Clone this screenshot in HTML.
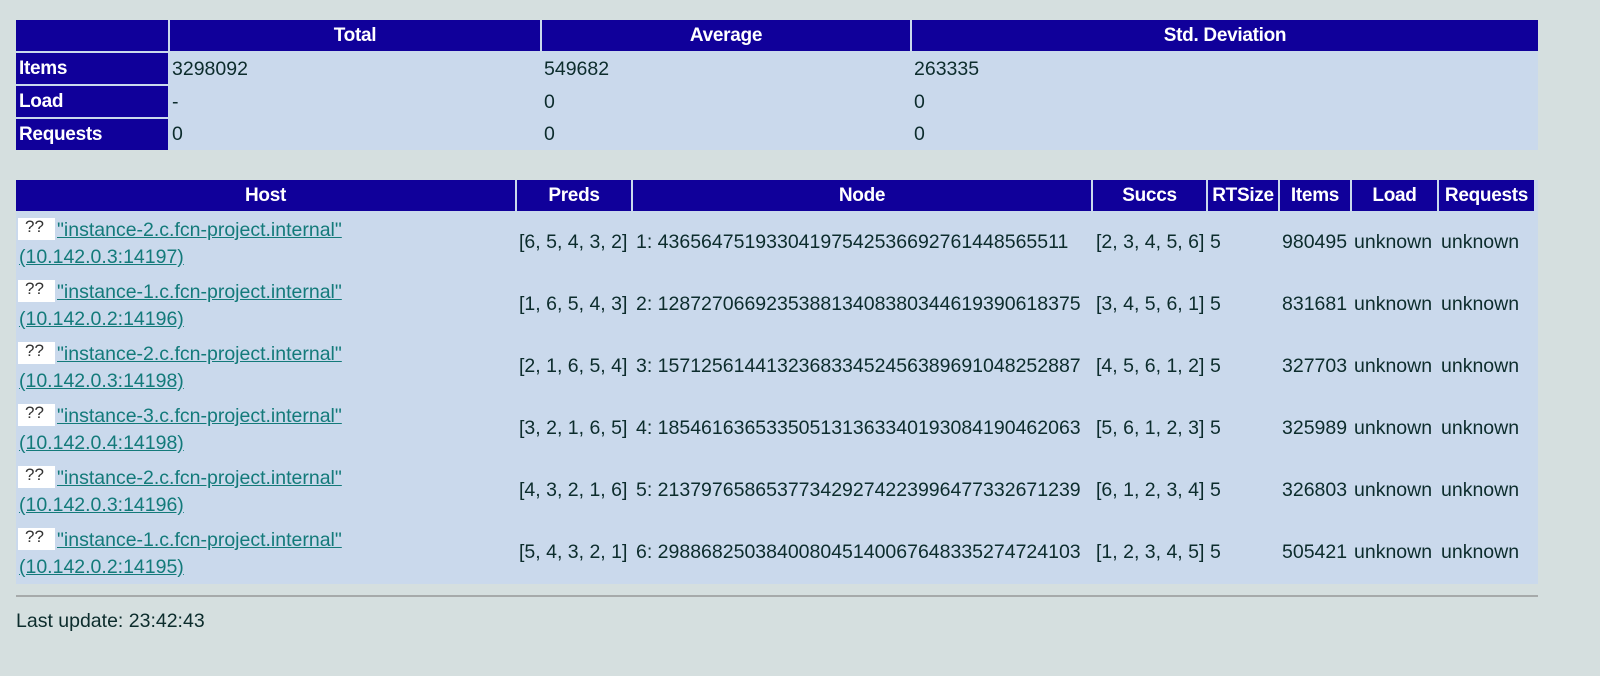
<!DOCTYPE html>
<html><head><meta charset="utf-8"><style>
*{margin:0;padding:0;box-sizing:border-box}
body{width:1600px;height:676px;background:#d5dfdf;font-family:"Liberation Sans",Arial,sans-serif;font-size:19.5px;color:#0c2c2c;position:relative;overflow:hidden}
.h{position:absolute;background:#10009a;color:#fff;font-weight:bold;text-align:center;line-height:31px;height:31px;white-space:nowrap;overflow:hidden;font-size:19px;letter-spacing:-0.3px}
.l{text-align:left;padding-left:3px}
.bg{position:absolute;background:#cad9ec}
.t{position:absolute;white-space:nowrap;line-height:22px}
a{color:#137a7a;text-decoration:underline}
.img{position:absolute;width:37px;height:22px;background:#fff;font-size:17px;color:#333;padding-left:7px;line-height:17px}
hr{position:absolute;left:16px;top:595px;width:1522px;border:0;border-top:2px solid #a6aaaa}
</style></head><body>
<div class="bg" style="left:16px;top:20px;width:1522px;height:130px"></div>
<div class="h" style="left:16px;top:20px;width:152px"></div>
<div class="h" style="left:170px;top:20px;width:370px">Total</div>
<div class="h" style="left:542px;top:20px;width:368px">Average</div>
<div class="h" style="left:912px;top:20px;width:626px">Std. Deviation</div>
<div class="h l" style="left:16px;top:53px;width:152px">Items</div>
<div class="h l" style="left:16px;top:86px;width:152px">Load</div>
<div class="h l" style="left:16px;top:119px;width:152px">Requests</div>
<div class="t" style="left:172px;top:58px">3298092</div><div class="t" style="left:544px;top:58px">549682</div><div class="t" style="left:914px;top:58px">263335</div>
<div class="t" style="left:172px;top:91px">-</div><div class="t" style="left:544px;top:91px">0</div><div class="t" style="left:914px;top:91px">0</div>
<div class="t" style="left:172px;top:123px">0</div><div class="t" style="left:544px;top:123px">0</div><div class="t" style="left:914px;top:123px">0</div>

<div class="bg" style="left:16px;top:180px;width:1522px;height:404px"></div>
<div class="h" style="left:16px;top:180px;width:499px">Host</div>
<div class="h" style="left:517px;top:180px;width:114px">Preds</div>
<div class="h" style="left:633px;top:180px;width:458px">Node</div>
<div class="h" style="left:1093px;top:180px;width:113px">Succs</div>
<div class="h" style="left:1208px;top:180px;width:70px">RTSize</div>
<div class="h" style="left:1280px;top:180px;width:70px">Items</div>
<div class="h" style="left:1352px;top:180px;width:85px">Load</div>
<div class="h" style="left:1439px;top:180px;width:95px">Requests</div>

<div id="rows"></div>
<hr>
<div class="t" style="left:16px;top:610px">Last update: 23:42:43</div>
<script>
var d=[["2","10.142.0.3:14197","[6, 5, 4, 3, 2]","1: 43656475193304197542536692761448565511","[2, 3, 4, 5, 6]","980495"],
["1","10.142.0.2:14196","[1, 6, 5, 4, 3]","2: 128727066923538813408380344619390618375","[3, 4, 5, 6, 1]","831681"],
["2","10.142.0.3:14198","[2, 1, 6, 5, 4]","3: 157125614413236833452456389691048252887","[4, 5, 6, 1, 2]","327703"],
["3","10.142.0.4:14198","[3, 2, 1, 6, 5]","4: 185461636533505131363340193084190462063","[5, 6, 1, 2, 3]","325989"],
["2","10.142.0.3:14196","[4, 3, 2, 1, 6]","5: 213797658653773429274223996477332671239","[6, 1, 2, 3, 4]","326803"],
["1","10.142.0.2:14195","[5, 4, 3, 2, 1]","6: 298868250384008045140067648335274724103","[1, 2, 3, 4, 5]","505421"]];
var h="";
d.forEach(function(r,i){var y=212+i*62;var m=y+19;
h+='<div class="img" style="left:18px;top:'+(y+6)+'px">??</div>';
h+='<div class="t" style="left:57px;top:'+(y+7)+'px"><a>"instance-'+r[0]+'.c.fcn-project.internal"</a></div>';
h+='<div class="t" style="left:19px;top:'+(y+34)+'px"><a>('+r[1]+')</a></div>';
h+='<div class="t" style="left:519px;top:'+m+'px">'+r[2]+'</div>';
h+='<div class="t" style="left:636px;top:'+m+'px">'+r[3]+'</div>';
h+='<div class="t" style="left:1096px;top:'+m+'px">'+r[4]+'</div>';
h+='<div class="t" style="left:1210px;top:'+m+'px">5</div>';
h+='<div class="t" style="left:1282px;top:'+m+'px">'+r[5]+'</div>';
h+='<div class="t" style="left:1354px;top:'+m+'px">unknown</div>';
h+='<div class="t" style="left:1441px;top:'+m+'px">unknown</div>';});
document.getElementById("rows").innerHTML=h;
</script>
</body></html>
